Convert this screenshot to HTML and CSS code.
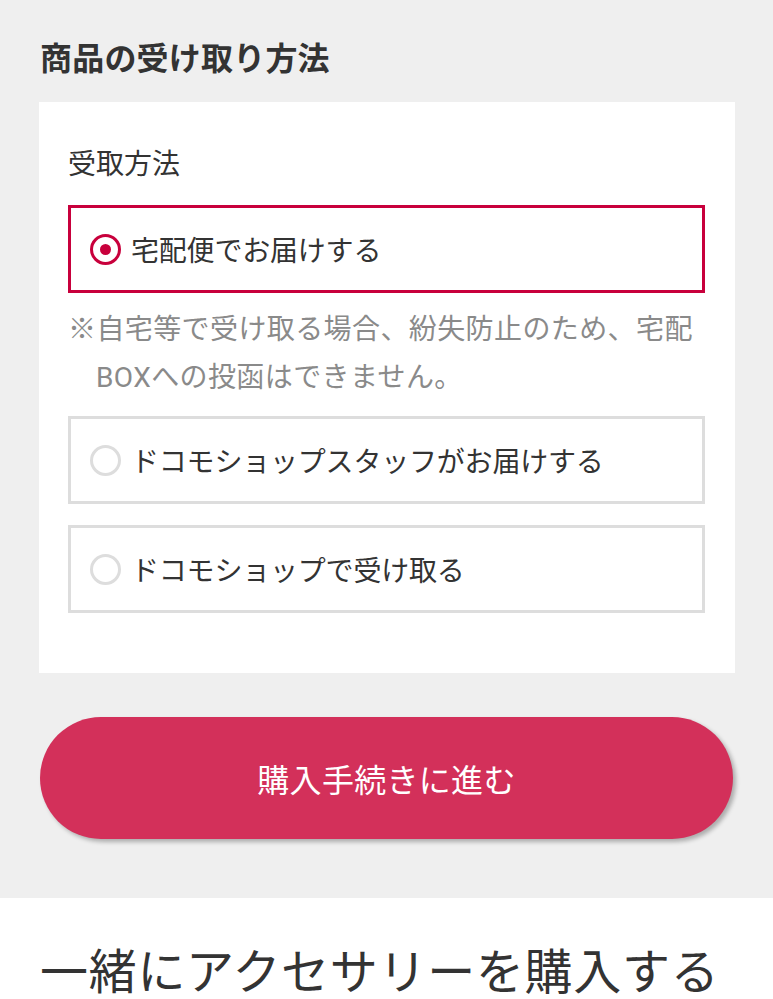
FILE: index.html
```html
<!DOCTYPE html>
<html lang="ja">
<head>
<meta charset="utf-8">
<title>商品の受け取り方法</title>
<link rel="stylesheet" href="styles.css">
</head>
<body>
<section class="receive">
  <h2 class="receive-title">商品の受け取り方法</h2>
  <div class="card">
    <p class="card-label">受取方法</p>
    <label class="option option-selected">
      <span class="radio radio-on"></span>
      <span class="option-text">宅配便でお届けする</span>
    </label>
    <p class="note">※自宅等で受け取る場合、紛失防止のため、宅配<span class="latin">BOX</span>への投函はできません。</p>
    <label class="option">
      <span class="radio"></span>
      <span class="option-text">ドコモショップスタッフがお届けする</span>
    </label>
    <label class="option option-last">
      <span class="radio"></span>
      <span class="option-text">ドコモショップで受け取る</span>
    </label>
  </div>
  <div class="action">
    <button class="primary-btn" type="button">購入手続きに進む</button>
  </div>
</section>
<section class="accessory">
  <h2 class="accessory-title">一緒にアクセサリーを購入する</h2>
</section>
</body>
</html>
```
FILE: styles.css
```css
html, body {
  margin: 0;
  padding: 0;
}
body {
  background: #ffffff;
  font-family: "Noto Sans CJK JP", "Noto Sans", sans-serif;
  color: #333333;
}
.receive {
  background: #efefef;
  padding: 33px 0 59px;
}
.receive-title {
  margin: 0 0 23px 40px;
  font-size: 32px;
  line-height: 46px;
  font-weight: 700;
  letter-spacing: 0.2px;
  color: #333333;
}
.card {
  background: #ffffff;
  margin-left: 39px;
  width: 696px;
  box-sizing: border-box;
  padding: 40px 30px 60px 29px;
}
.card-label {
  margin: 0 0 23px 0;
  font-size: 28px;
  line-height: 40px;
  color: #333333;
}
.option {
  display: flex;
  align-items: center;
  height: 88px;
  box-sizing: border-box;
  border: 3px solid #dddddd;
  padding-left: 19px;
  margin-bottom: 21px;
}
.option-selected {
  border-color: #c8003c;
  margin-bottom: 0;
}
.option-last {
  margin-bottom: 0;
}
.radio {
  width: 31px;
  height: 31px;
  box-sizing: border-box;
  border: 3px solid #dddddd;
  border-radius: 50%;
  display: flex;
  align-items: center;
  justify-content: center;
  flex-shrink: 0;
  margin-right: 10px;
}
.radio-on {
  border: 3.5px solid #c8003c;
}
.radio-on::after {
  content: "";
  width: 11px;
  height: 11px;
  border-radius: 50%;
  background: #c8003c;
}
.option-text {
  font-size: 28px;
  line-height: 40px;
  letter-spacing: -0.2px;
  color: #333333;
}
.note {
  margin: 10px 0 17px 0;
  font-size: 28px;
  line-height: 48px;
  letter-spacing: 0.4px;
  color: #8a8a8a;
  padding-left: 1em;
  text-indent: -1em;
}
.latin {
  font-family: "Roboto", "Noto Sans CJK JP", sans-serif;
  line-height: 1;
}
.action {
  margin-top: 44px;
  padding-left: 40px;
}
.primary-btn {
  display: block;
  width: 693px;
  height: 122px;
  border: none;
  border-radius: 61px;
  background: #d3305a;
  color: #ffffff;
  font-family: "Noto Sans CJK JP", "Noto Sans", sans-serif;
  font-size: 32px;
  font-weight: 400;
  letter-spacing: 0.3px;
  box-shadow: 3px 3px 4px rgba(0, 0, 0, 0.28);
  padding: 0;
}
.accessory {
  background: #ffffff;
  padding: 40px 0 40px 40px;
}
.accessory-title {
  margin: 0;
  font-size: 48px;
  line-height: 60px;
  font-weight: 400;
  letter-spacing: 0.7px;
  color: #333333;
}
```
